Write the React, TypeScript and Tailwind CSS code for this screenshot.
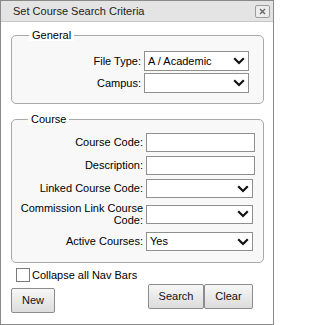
import React from 'react';

function Chevron() {
  return (
    <svg width="12" height="8" viewBox="0 0 12 8" className="pointer-events-none absolute right-[4px] top-1/2 -translate-y-1/2">
      <polyline points="1.2,1.3 6,6 10.8,1.3" fill="none" stroke="#111" strokeWidth="2.2" />
    </svg>
  );
}

function Select({ value, width, height = 'h-[19px]' }: { value?: string; width: string; height?: string }) {
  return (
    <div className={`relative ${width} ${height}`}>
      <select
        defaultValue={value ?? ''}
        className={`w-full ${height} appearance-none rounded-none border border-[#8f8f8f] bg-white pl-[3px] pr-[16px] text-[11px] leading-none text-black outline-none`}
      >
        <option value={value ?? ''}>{value ?? ''}</option>
      </select>
      <Chevron />
    </div>
  );
}

function TextInput({ width }: { width: string }) {
  return <input type="text" className={`${width} h-[19px] rounded-none border border-[#8f8f8f] bg-white px-[3px] text-[11px] outline-none`} />;
}

function Button({ label, className = '' }: { label: string; className?: string }) {
  return (
    <button className={`h-[25px] rounded-[2px] border border-[#8c8c8c] bg-gradient-to-b from-[#f7f7f7] to-[#dcdcdc] text-[11px] text-[#111] ${className}`}>
      {label}
    </button>
  );
}

export default function App() {
  return (
    <div className="flex h-[325px] w-[274px] flex-col border border-[#8a8a8a] bg-white font-['Liberation_Sans',Arial,sans-serif] text-[11px] text-black">
      {/* title bar */}
      <div className="flex h-[21px] shrink-0 items-center border-b border-[#c8c8c8] bg-[#e4e4e4] pl-[12px] pr-[3px]">
        <span className="text-[11px] text-[#222]">Set Course Search Criteria</span>
        <button className="ml-auto flex h-[13px] w-[15px] items-center justify-center rounded-[2px] border border-[#9c9c9c] bg-[#ececec]">
          <svg width="7" height="7" viewBox="0 0 7 7">
            <path d="M1 1L6 6M6 1L1 6" stroke="#666" strokeWidth="1.4" />
          </svg>
        </button>
      </div>

      {/* General */}
      <fieldset className="ml-[10px] mt-[7px] w-[253px] rounded-[5px] border border-[#a9a9a9] bg-[#f8f8f8] pb-[10px]">
        <legend className="ml-[17px] bg-white px-[3px] text-[11px] leading-[12px]">General</legend>
        <div className="mt-[10px] flex items-center">
          <label className="w-[129px] text-right">File Type:</label>
          <div className="ml-[3px]">
            <Select value="A / Academic" width="w-[105px]" height="h-[20px]" />
          </div>
        </div>
        <div className="mt-[2px] flex items-center">
          <label className="w-[129px] text-right">Campus:</label>
          <div className="ml-[3px]">
            <Select width="w-[105px]" height="h-[20px]" />
          </div>
        </div>
      </fieldset>

      {/* Course */}
      <fieldset className="ml-[10px] mt-[9px] w-[253px] rounded-[5px] border border-[#a9a9a9] bg-[#f8f8f8] pb-[11px]">
        <legend className="ml-[16px] bg-white px-[3px] text-[11px] leading-[12px]">Course</legend>
        <div className="mt-[8px] flex items-center">
          <label className="w-[131px] text-right">Course Code:</label>
          <div className="ml-[3px]">
            <TextInput width="w-[109px]" />
          </div>
        </div>
        <div className="mt-[4px] flex items-center">
          <label className="w-[131px] text-right">Description:</label>
          <div className="ml-[3px]">
            <TextInput width="w-[109px]" />
          </div>
        </div>
        <div className="mt-[4px] flex items-center">
          <label className="w-[131px] text-right">Linked Course Code:</label>
          <div className="ml-[3px]">
            <Select width="w-[107px]" />
          </div>
        </div>
        <div className="mt-[3px] flex h-[26px] items-center">
          <label className="w-[131px] pl-[8px] text-right leading-[12px]">Commission Link Course Code:</label>
          <div className="ml-[3px]">
            <Select width="w-[107px]" />
          </div>
        </div>
        <div className="mt-[5px] flex items-center">
          <label className="w-[131px] text-right">Active Courses:</label>
          <div className="ml-[3px]">
            <Select value="Yes" width="w-[107px]" />
          </div>
        </div>
      </fieldset>

      {/* collapse */}
      <label className="ml-[15px] mt-[5px] flex items-center gap-[2px]">
        <input type="checkbox" className="h-[14px] w-[14px] appearance-none rounded-none border border-[#7a7a7a] bg-white" />
        <span className="leading-[14px]">Collapse all Nav Bars</span>
      </label>

      {/* buttons */}
      <div className="mt-[2px] flex items-start pl-[10px] pr-[20px]">
        <Button label="New" className="mt-[4px] w-[44px]" />
        <div className="ml-auto flex">
          <Button label="Search" className="w-[56px]" />
          <Button label="Clear" className="w-[49px]" />
        </div>
      </div>
    </div>
  );
}
